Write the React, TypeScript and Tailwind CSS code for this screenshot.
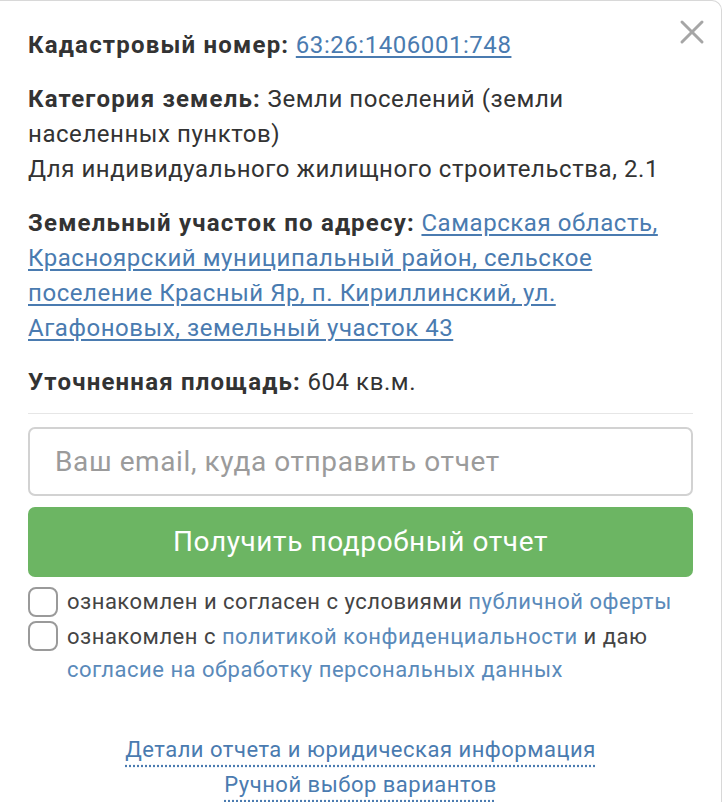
import React from 'react';

const font = { fontFamily: 'Roboto, "Liberation Sans", sans-serif' };

function Checkbox() {
  return <span className="block w-[30px] h-[30px] shrink-0 rounded-[8px] border-2 border-[#9a9a9a] bg-white" />;
}

export default function App() {
  return (
    <div className="w-[725px] h-[802px] bg-white overflow-hidden" style={font}>
      <div className="relative w-[722px] h-[820px] border-t border-r border-[#d8d8d8] rounded-tr-[10px] px-[28px] pt-[27px] text-[#333]">
        <button className="absolute right-[16px] top-[18px] w-[26px] h-[26px] text-[#a6a6a6]" aria-label="close">
          <svg viewBox="0 0 26 26" className="w-full h-full" stroke="currentColor" strokeWidth="3" strokeLinecap="round">
            <line x1="3" y1="3" x2="23" y2="23" />
            <line x1="23" y1="3" x2="3" y2="23" />
          </svg>
        </button>

        <div className="text-[24px] leading-[35px] tracking-[0.55px] pr-[30px]">
          <p>
            <b className="font-bold tracking-[1.2px]">Кадастровый номер:</b>{' '}
            <a href="#" className="text-[#4a7bb0] underline underline-offset-[3px]">63:26:1406001:748</a>
          </p>
          <p className="mt-[19px]">
            <b className="font-bold tracking-[1.2px]">Категория земель:</b> Земли поселений (земли населенных пунктов)
          </p>
          <p>Для индивидуального жилищного строительства, 2.1</p>
          <p className="mt-[19px]">
            <b className="font-bold tracking-[1.2px]">Земельный участок по адресу:</b>{' '}
            <a href="#" className="text-[#4a7bb0] underline underline-offset-[3px]">
              Самарская область, Красноярский муниципальный район, сельское поселение Красный Яр, п. Кириллинский, ул. Агафоновых, земельный участок 43
            </a>
          </p>
          <p className="mt-[19px]">
            <b className="font-bold tracking-[1.2px]">Уточненная площадь:</b> 604 кв.м.
          </p>
        </div>

        <div className="mt-[13px] h-px bg-[#e6e6e6]" />

        <input
          type="text"
          placeholder="Ваш email, куда отправить отчет"
          className="mt-[13px] block w-full h-[69px] rounded-[7px] border-2 border-[#d2d2d2] px-[25px] text-[28px] tracking-[0.6px] placeholder:text-[#9b9b9b] outline-none"
        />

        <button className="mt-[11px] block w-full h-[70px] rounded-[7px] bg-[#6cb563] text-white text-[28px] tracking-[0.6px]">
          Получить подробный отчет
        </button>

        <div className="mt-[8px] text-[22px] leading-[33px] tracking-[0.5px] text-[#444]">
          <label className="flex items-center gap-[9px]">
            <Checkbox />
            <span>
              ознакомлен и согласен с условиями{' '}
              <a href="#" className="text-[#5a8aba]">публичной оферты</a>
            </span>
          </label>
          <label className="flex items-start gap-[9px] mt-[2px]">
            <span className="mt-px"><Checkbox /></span>
            <span>
              ознакомлен с <a href="#" className="text-[#5a8aba]">политикой конфиденциальности</a> и даю{' '}
              <a href="#" className="text-[#5a8aba]">согласие на обработку персональных данных</a>
            </span>
          </label>
        </div>

        <div className="mt-[46px] flex flex-col items-center text-[22px] leading-[35px] tracking-[0.5px]">
          <a href="#" className="text-[#4a7bb0] underline decoration-dotted underline-offset-[8px]">
            Детали отчета и юридическая информация
          </a>
          <a href="#" className="text-[#4a7bb0] underline decoration-dotted underline-offset-[8px]">
            Ручной выбор вариантов
          </a>
        </div>
      </div>
    </div>
  );
}
